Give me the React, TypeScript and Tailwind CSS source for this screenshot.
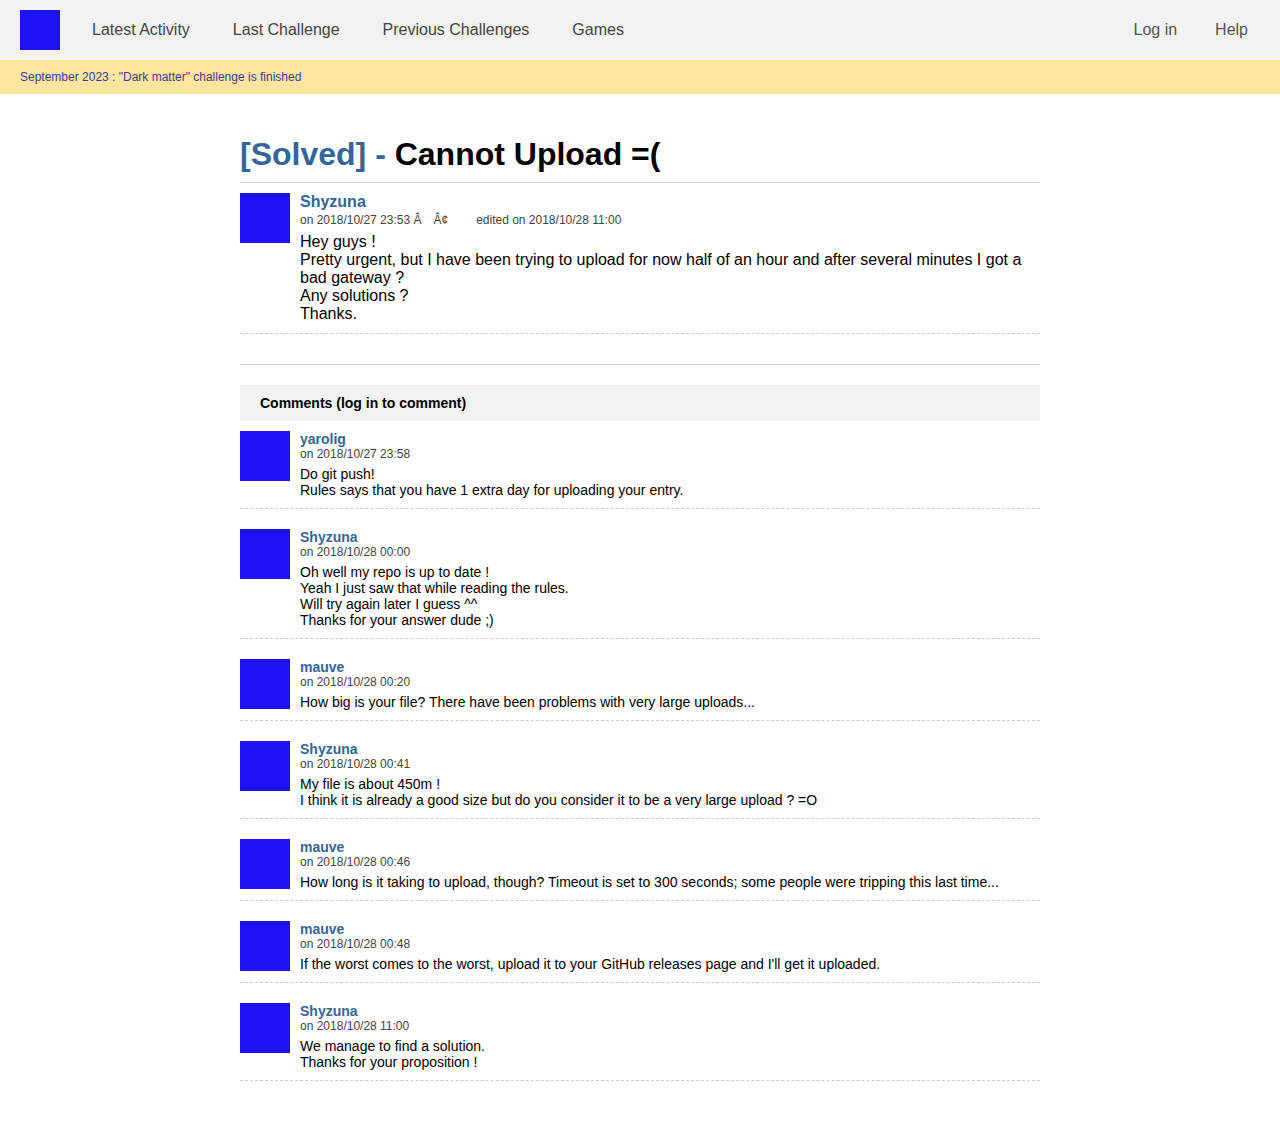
import React from 'react';

interface CommentItem {
  author: string;
  date: string;
  lines: string[];
}

const comments: CommentItem[] = [
  {
    author: 'yarolig',
    date: 'on 2018/10/27 23:58',
    lines: ['Do git push!', 'Rules says that you have 1 extra day for uploading your entry.'],
  },
  {
    author: 'Shyzuna',
    date: 'on 2018/10/28 00:00',
    lines: [
      'Oh well my repo is up to date !',
      'Yeah I just saw that while reading the rules.',
      'Will try again later I guess ^^',
      'Thanks for your answer dude ;)',
    ],
  },
  {
    author: 'mauve',
    date: 'on 2018/10/28 00:20',
    lines: ['How big is your file? There have been problems with very large uploads...'],
  },
  {
    author: 'Shyzuna',
    date: 'on 2018/10/28 00:41',
    lines: [
      'My file is about 450m !',
      'I think it is already a good size but do you consider it to be a very large upload ? =O',
    ],
  },
  {
    author: 'mauve',
    date: 'on 2018/10/28 00:46',
    lines: [
      'How long is it taking to upload, though? Timeout is set to 300 seconds; some people were tripping this last time...',
    ],
  },
  {
    author: 'mauve',
    date: 'on 2018/10/28 00:48',
    lines: ["If the worst comes to the worst, upload it to your GitHub releases page and I'll get it uploaded."],
  },
  {
    author: 'Shyzuna',
    date: 'on 2018/10/28 11:00',
    lines: ['We manage to find a solution.', 'Thanks for your proposition !'],
  },
];

const Avatar = () => <div className="w-[50px] h-[50px] shrink-0 bg-[#1e12f5]" />;

const Comment: React.FC<{ item: CommentItem }> = ({ item }) => (
  <div className="flex gap-[10px] pt-[10px] pb-[10px] mb-[10px] border-b border-dashed border-[#cccccc]">
    <Avatar />
    <div className="flex flex-col">
      <a className="text-[14px] leading-[16px] font-bold text-[#336699]">{item.author}</a>
      <div className="mt-[1px] text-[12px] leading-[13px] text-[#444444]">{item.date}</div>
      <div className="mt-[5px] text-[14px] leading-[16px] text-black">
        {item.lines.map((l, i) => (
          <div key={i}>{l}</div>
        ))}
      </div>
    </div>
  </div>
);

export default function App() {
  const nav = ['Latest Activity', 'Last Challenge', 'Previous Challenges', 'Games'];

  return (
    <div className="min-h-[1121px] bg-white font-['Liberation_Sans',Arial,sans-serif]">
      <header className="h-[60px] bg-[#f2f2f2] flex items-center pl-[20px] pr-[32px]">
        <div className="w-[40px] h-[40px] bg-[#1e12f5]" />
        <nav className="flex items-center gap-[43px] ml-[32px] text-[16px] text-[#444444]">
          {nav.map((n) => (
            <a key={n}>{n}</a>
          ))}
        </nav>
        <div className="ml-auto flex items-center gap-[38px] text-[16px] text-[#555555]">
          <a>Log in</a>
          <a>Help</a>
        </div>
      </header>

      <div className="h-[34px] bg-[#ffe59e] flex items-center px-[20px] text-[12px] text-[#3c3c9c]">
        September 2023 : "Dark matter" challenge is finished
      </div>

      <main className="w-[800px] mx-auto pt-[40px]">
        <h1 className="text-[32px] leading-[40px] font-bold text-black pb-[8px] border-b border-[#cccccc]">
          <span className="text-[#336699]">[Solved] - </span>Cannot Upload =(
        </h1>

        <div className="flex gap-[10px] pt-[10px] pb-[10px] border-b border-dashed border-[#cccccc]">
          <Avatar />
          <div className="flex flex-col pt-[1px]">
            <a className="text-[16px] leading-[16px] font-bold text-[#336699]">Shyzuna</a>
            <div className="mt-[3px] text-[12px] leading-[14px] text-[#444444] whitespace-pre">
              on 2018/10/27 23:53 Â<span className="ml-[12px]">Â¢</span>
              <span className="ml-[28px]">edited on 2018/10/28 11:00</span>
            </div>
            <div className="mt-[6px] text-[16px] leading-[18px] text-black">
              <div>Hey guys !</div>
              <div>
                Pretty urgent, but I have been trying to upload for now half of an hour and after several minutes I got a
                bad gateway ?
              </div>
              <div>Any solutions ?</div>
              <div>Thanks.</div>
            </div>
          </div>
        </div>

        <div className="mt-[30px] border-t border-[#cccccc]" />

        <div className="mt-[20px] h-[36px] bg-[#f2f2f2] flex items-center px-[20px] text-[14px] font-bold text-black">
          Comments (log in to comment)
        </div>

        <div>
          {comments.map((c, i) => (
            <Comment key={i} item={c} />
          ))}
        </div>
      </main>
    </div>
  );
}
